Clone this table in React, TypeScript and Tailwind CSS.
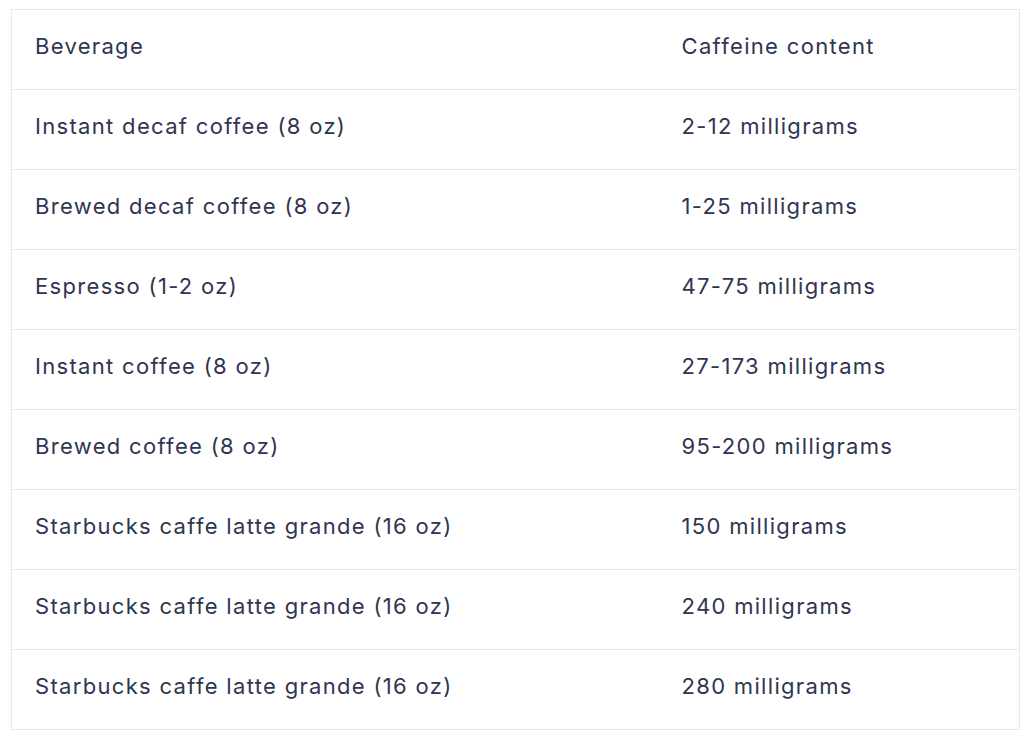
const rows: [string, string][] = [
  ['Instant decaf coffee (8 oz)', '2-12 milligrams'],
  ['Brewed decaf coffee (8 oz)', '1-25 milligrams'],
  ['Espresso (1-2 oz)', '47-75 milligrams'],
  ['Instant coffee (8 oz)', '27-173 milligrams'],
  ['Brewed coffee (8 oz)', '95-200 milligrams'],
  ['Starbucks caffe latte grande (16 oz)', '150 milligrams'],
  ['Starbucks caffe latte grande (16 oz)', '240 milligrams'],
  ['Starbucks caffe latte grande (16 oz)', '280 milligrams'],
];

export default function App() {
  return (
    <div className="min-h-screen bg-white pt-[9px] pl-[11px] font-['Inter',sans-serif] text-[#2f3550]">
      <table className="w-[1009px] border-collapse border border-[#e8e8e8] text-[22px] tracking-[0.06em]">
        <thead>
          <tr className="h-[80px]">
            <th className="w-[670px] pl-[23px] pb-[6px] text-left font-normal">Beverage</th>
            <th className="pb-[6px] text-left font-normal">Caffeine content</th>
          </tr>
        </thead>
        <tbody>
          {rows.map(([drink, amount], i) => (
            <tr key={i} className="h-[80px] border-t border-[#e8e8e8]">
              <td className="pl-[23px] pb-[6px]">{drink}</td>
              <td className="pb-[6px]">{amount}</td>
            </tr>
          ))}
        </tbody>
      </table>
    </div>
  );
}
